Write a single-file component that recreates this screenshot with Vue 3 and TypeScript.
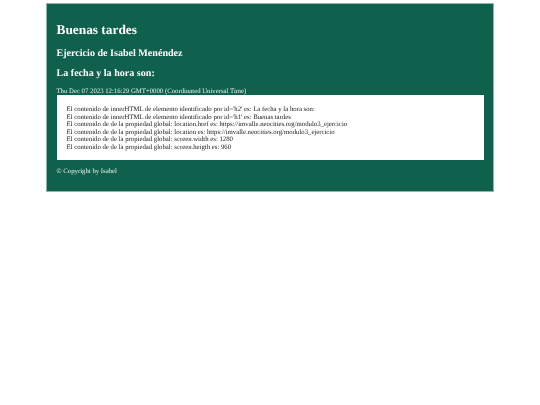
<script setup lang="ts">
const lines: string[] = [
  "El contenido de innerHTML de elemento identificado por id='h2' es: La fecha y la hora son:",
  "El contenido de innerHTML de elemento identificado por id='h1' es: Buenas tardes",
  "El contenido de de la propiedad global: location.href es: https://imvalle.neocities.org/modulo3_ejercicio",
  "El contenido de de la propiedad global: location es: https://imvalle.neocities.org/modulo3_ejercicio",
  "El contenido de de la propiedad global: screen.width es: 1280",
  "El contenido de de la propiedad global: screen.heigth es: 960",
];
</script>

<template>
  <div class="page">
    <main class="card">
      <h1>Buenas tardes</h1>
      <h3>Ejercicio de Isabel Menéndez</h3>
      <h2>La fecha y la hora son:</h2>
      <p class="date">Thu Dec 07 2023 12:16:29 GMT+0000 (Coordinated Universal Time)</p>
      <div class="box">
        <div v-for="line in lines" :key="line">{{ line }}</div>
      </div>
      <p class="foot">© Copyright by Isabel</p>
    </main>
  </div>
</template>

<style scoped>
.page {
  padding: 3px 46px 0 46px;
  font-family: "Liberation Serif", "Times New Roman", serif;
  text-rendering: geometricPrecision;
  filter: blur(0.3px);
}
.card {
  box-sizing: border-box;
  height: 188.5px;
  padding: 17px 9.5px 0 9.5px;
  background: #0f604c;
  color: #fff;
  border: 1px solid #8db5a9;
}
h1 {
  margin: 0;
  font-size: 13.35px;
  line-height: 18px;
}
h3 {
  margin: 7.5px 0 0;
  font-size: 10.08px;
  line-height: 13px;
}
h2 {
  margin: 7px 0 0;
  font-size: 10.08px;
  line-height: 13px;
}
.date {
  margin: 9px 0 0;
  font-size: 6.75px;
  line-height: 6px;
  color: #e4eeeb;
}
.box {
  margin-top: 0.5px;
  padding: 11px 10px 0;
  height: 65px;
  box-sizing: border-box;
  background: #fff;
  color: #222;
  font-size: 6.75px;
  line-height: 7.6px;
}
.foot {
  margin: 7.5px 0 0;
  font-size: 6.75px;
  line-height: 8px;
  color: #e4eeeb;
}
</style>
